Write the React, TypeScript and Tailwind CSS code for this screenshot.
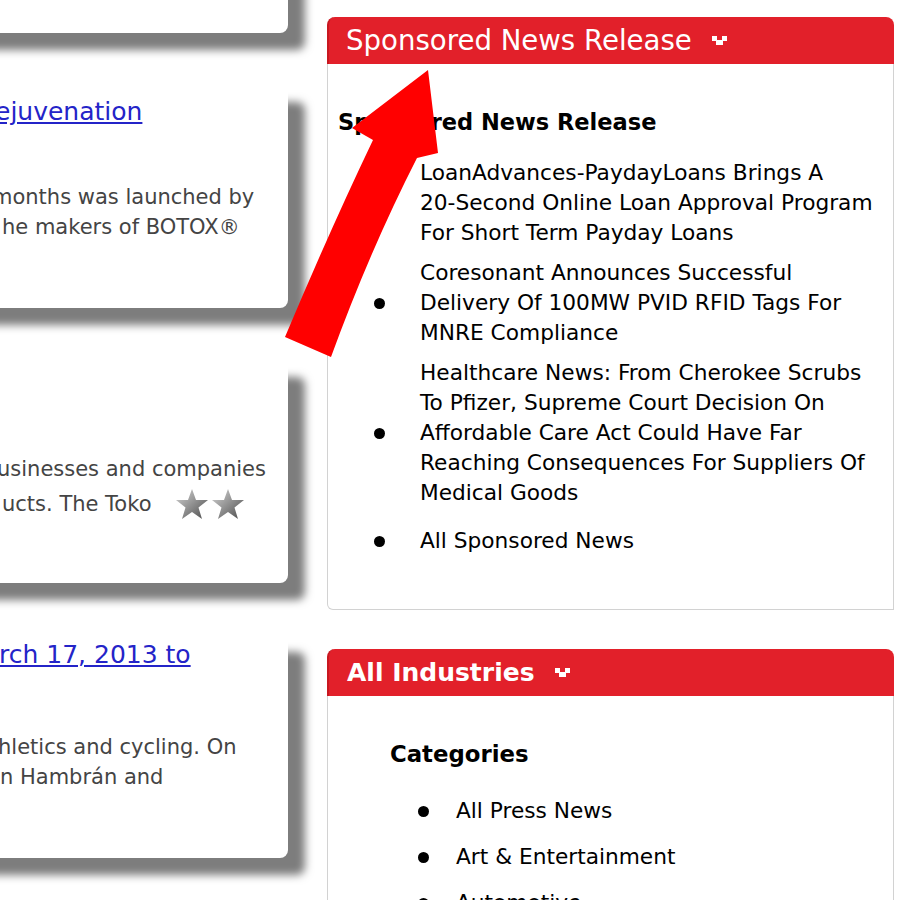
import React from "react";

const font = { fontFamily: '"DejaVu Sans", Verdana, sans-serif' };

const ToggleIcon = () => (
  <svg width="16" height="10" viewBox="0 0 16 10" className="shrink-0">
    <rect x="0" y="0" width="5" height="5" fill="#fff" />
    <rect x="10" y="0" width="5" height="5" fill="#fff" />
    <rect x="4" y="4" width="7" height="5" fill="#fff" />
  </svg>
);

const Star = ({ id }: { id: string }) => (
  <svg width="34" height="32" viewBox="0 0 34 32">
    <defs>
      <linearGradient id={id} x1="0" y1="0" x2="1" y2="1">
        <stop offset="0" stopColor="#d8d8d8" />
        <stop offset="0.55" stopColor="#8a8a8a" />
        <stop offset="1" stopColor="#4a4a4a" />
      </linearGradient>
    </defs>
    <polygon
      points="17,1 21,12 33,12 23.5,19.5 27,31 17,24 7,31 10.5,19.5 1,12 13,12"
      fill={`url(#${id})`}
    />
  </svg>
);

const Card = ({ children, className = "" }: { children?: React.ReactNode; className?: string }) => (
  <div
    className={`w-[450px] h-[223px] -ml-[162px] shrink-0 bg-white rounded-[8px] shadow-[17px_17px_9px_#7d7d7d] ${className}`}
  >
    <div className="pl-[162px] text-[21px] leading-[30px] text-[#444] whitespace-nowrap">{children}</div>
  </div>
);

const Bullet = () => <span className="block w-[11px] h-[11px] rounded-full bg-black" />;

const sponsored = [
  ["LoanAdvances-PaydayLoans Brings A", "20-Second Online Loan Approval Program", "For Short Term Payday Loans"],
  ["Coresonant Announces Successful", "Delivery Of 100MW PVID RFID Tags For", "MNRE Compliance"],
  [
    "Healthcare News: From Cherokee Scrubs",
    "To Pfizer, Supreme Court Decision On",
    "Affordable Care Act Could Have Far",
    "Reaching Consequences For Suppliers Of",
    "Medical Goods",
  ],
  ["All Sponsored News"],
];

const categories = ["All Press News", "Art & Entertainment", "Automotive"];

export default function App() {
  return (
    <div className="relative w-[923px] h-[900px] overflow-hidden bg-white flex" style={font}>
      {/* left column: cut-off article cards */}
      <div className="w-[327px] shrink-0 flex flex-col gap-[52px]">
        <Card className="-mt-[190px]" />
        <Card>
          <div className="pt-[12px]">
            <a className="block -ml-[5px] text-[25px] text-[#2424c8] underline">ejuvenation</a>
            <div className="mt-[55px] -ml-[8px]">months was launched by</div>
            <div className="ml-[2px]">he makers of BOTOX®</div>
          </div>
        </Card>
        <Card>
          <div className="pt-[94px]">
            <div className="-ml-[3px]">usinesses and companies</div>
            <div className="flex items-center h-[40px] ml-[2px]">
              <span>ucts. The Toko</span>
              <span className="ml-[24px] flex gap-[2px]">
                <Star id="s1" />
                <Star id="s2" />
              </span>
            </div>
          </div>
        </Card>
        <Card>
          <div className="pt-[5px]">
            <a className="block -ml-[1px] text-[25px] text-[#2424c8] underline">rch 17, 2013 to</a>
            <div className="mt-[62px] -ml-[2px]">hletics and cycling. On</div>
            <div className="ml-0">n Hambrán and</div>
          </div>
        </Card>
      </div>

      {/* right column: sidebar panels */}
      <div className="w-[567px] shrink-0 pt-[17px] flex flex-col gap-[39px]">
        <div>
          <div className="h-[47px] rounded-t-[8px] bg-[#e2202a] flex items-center pl-[17px] gap-[20px] border-l-2 border-[#c81820]">
            <span className="text-white text-[27.6px] leading-none">Sponsored News Release</span>
            <ToggleIcon />
          </div>
          <div className="h-[546px] border border-t-0 border-[#d2d2d2] rounded-bl-[6px] pl-[10px] pt-[43px] text-black">
            <div className="font-bold text-[22.5px] leading-[30px]">Sponsored News Release</div>
            <ul className="mt-[21px] flex flex-col gap-[10px]">
              {sponsored.map((lines, i) => (
                <li key={i} className={`flex items-center ${i === 3 ? "mt-[8px]" : ""}`}>
                  <span className="w-[82px] shrink-0 flex justify-center">
                    <Bullet />
                  </span>
                  <span className="text-[21.7px] leading-[30px] whitespace-nowrap">
                    {lines.map((l) => (
                      <span key={l} className="block">
                        {l}
                      </span>
                    ))}
                  </span>
                </li>
              ))}
            </ul>
          </div>
        </div>

        <div>
          <div className="h-[47px] rounded-t-[8px] bg-[#e2202a] flex items-center pl-[18px] gap-[20px] border-l-2 border-[#c81820]">
            <span className="text-white text-[25px] font-bold leading-none">All Industries</span>
            <ToggleIcon />
          </div>
          <div className="h-[400px] border border-t-0 border-[#d2d2d2] pl-[62px] pt-[43px] text-black">
            <div className="font-bold text-[22.8px] leading-[30px]">Categories</div>
            <ul className="mt-[27px] flex flex-col gap-[16px]">
              {categories.map((c) => (
                <li key={c} className="flex items-center">
                  <span className="w-[66px] shrink-0 flex justify-center">
                    <Bullet />
                  </span>
                  <span className="text-[21.7px] leading-[30px] whitespace-nowrap">{c}</span>
                </li>
              ))}
            </ul>
          </div>
        </div>
      </div>

      {/* red annotation arrow */}
      <svg className="absolute left-0 top-0 pointer-events-none" width="923" height="900">
        <path
          d="M428 70 L438 153 L417 158 Q370 250 331 357 L285 337 Q330 230 373 140 L352 128 Z"
          fill="#ff0000"
        />
      </svg>
    </div>
  );
}
